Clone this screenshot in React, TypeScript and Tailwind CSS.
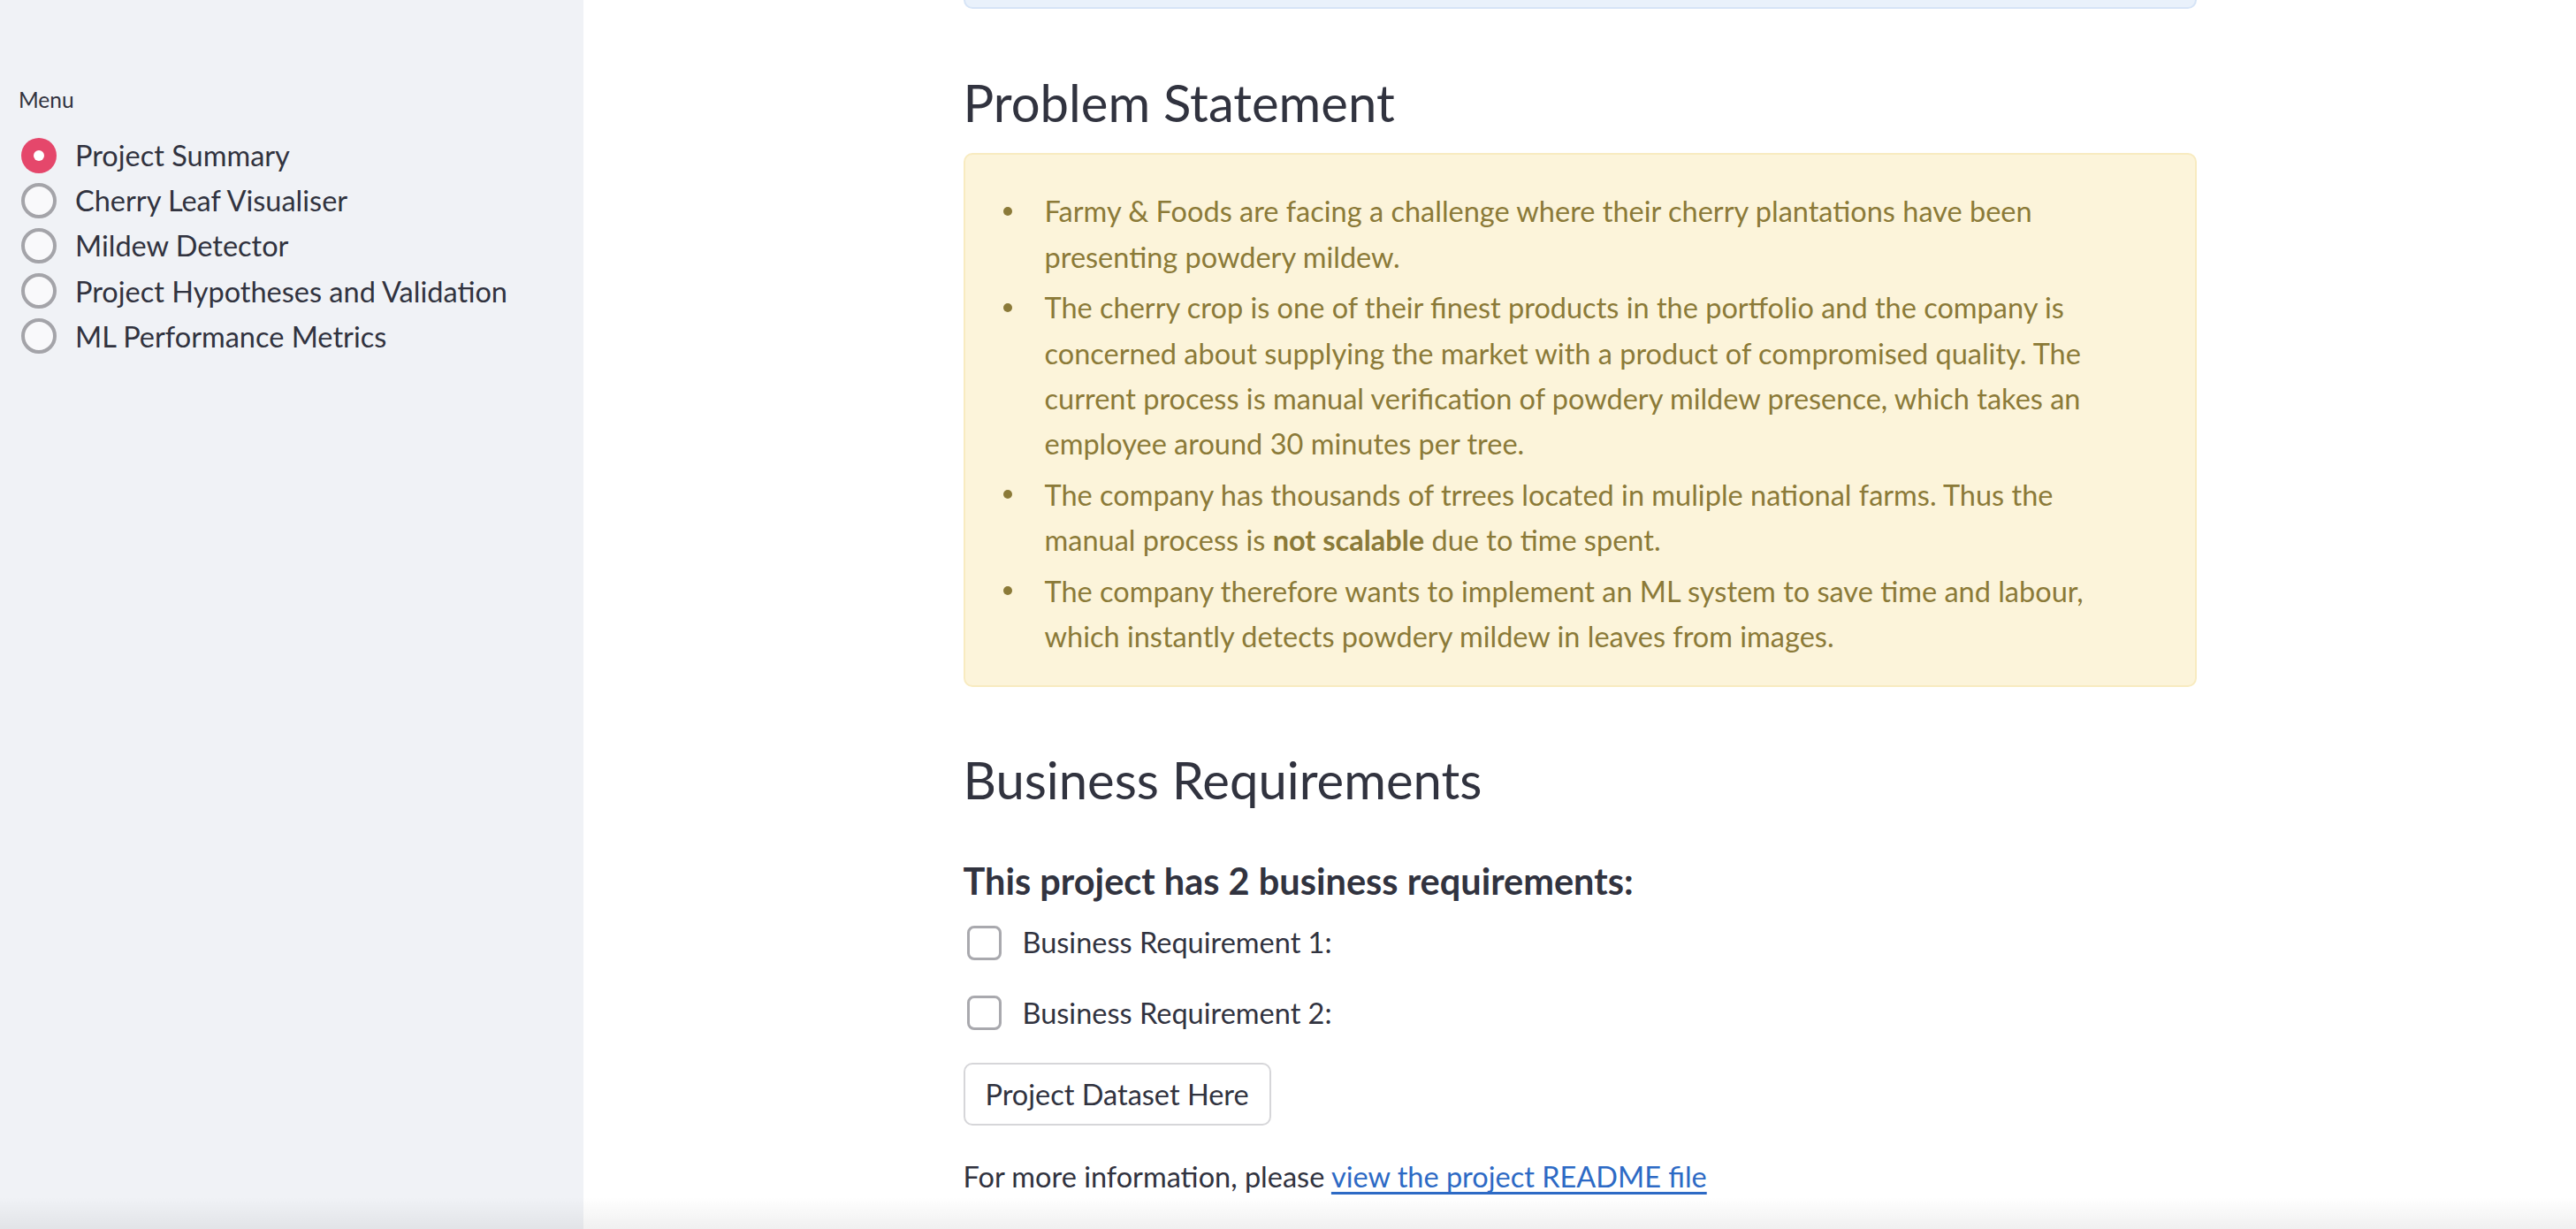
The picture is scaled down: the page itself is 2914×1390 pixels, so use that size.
import React from "react";

const menu = [
  "Project Summary",
  "Cherry Leaf Visualiser",
  "Mildew Detector",
  "Project Hypotheses and Validation",
  "ML Performance Metrics",
];

function Radio({ selected }: { selected: boolean }) {
  if (selected) {
    return (
      <span className="flex h-[40px] w-[40px] shrink-0 items-center justify-center rounded-full bg-[#e5476b]">
        <span className="h-[12px] w-[12px] rounded-full bg-white" />
      </span>
    );
  }
  return <span className="h-[40px] w-[40px] shrink-0 rounded-full border-[4px] border-[#a4a4a9] bg-[#f9f9fb]" />;
}

function Checkbox({ label }: { label: string }) {
  return (
    <label className="flex h-[51.2px] items-center">
      <span className="ml-[4px] h-[39px] w-[39px] shrink-0 rounded-[8px] border-[3px] border-[#a9a9ae] bg-white" />
      <span className="ml-[24px] text-[32.5px] leading-[51.2px]">{label}</span>
    </label>
  );
}

function Bullet({ children, first }: { children: React.ReactNode; first?: boolean }) {
  return (
    <li className={`flex ${first ? "" : "mt-[6.5px]"}`}>
      <span className="flex h-[51.2px] w-[58px] shrink-0 items-center pl-[11px]">
        <span className="h-[10px] w-[10px] rounded-full bg-[#8b7a38]" />
      </span>
      <span className="max-w-[1215px]">{children}</span>
    </li>
  );
}

export default function App() {
  return (
    <div className="relative flex h-[1390px] w-full overflow-hidden font-[Lato,sans-serif] text-[#31333f]">
      <aside className="w-[660px] shrink-0 bg-[#f0f2f6] pl-[21px] pt-[93px]">
        <div className="text-[24.5px] leading-[40px]">Menu</div>
        <div className="mt-[17px] flex flex-col pl-[3px]">
          {menu.map((m, i) => (
            <div key={m} className="flex h-[51.2px] items-center">
              <Radio selected={i === 0} />
              <span className="ml-[21px] text-[32.5px] leading-[51.2px]">{m}</span>
            </div>
          ))}
        </div>
      </aside>

      <main className="flex-1 bg-white">
        <div className="mx-auto w-[1395px]">
          <div className="h-[10px] rounded-b-[10px] border-x-2 border-b-2 border-[#d6e4f6] bg-[#e9f1fb]" />

          <h2 className="mt-[71px] text-[58px] font-normal leading-[69.6px]">Problem Statement</h2>

          <div className="mt-[22.4px] rounded-[10px] border-2 border-[#f8ebc0] bg-[#fcf4da] px-[32px] pb-[30px] pt-[38.5px] text-[32.5px] leading-[51.2px] text-[#8b7a38]">
            <ul>
              <Bullet first>
                Farmy &amp; Foods are facing a challenge where their cherry plantations have been presenting powdery
                mildew.
              </Bullet>
              <Bullet>
                The cherry crop is one of their finest products in the portfolio and the company is concerned about
                supplying the market with a product of compromised quality. The current process is manual verification
                of powdery mildew presence, which takes an employee around 30 minutes per tree.
              </Bullet>
              <Bullet>
                The company has thousands of trrees located in muliple national farms. Thus the manual process is{" "}
                <strong className="font-bold">not scalable</strong> due to time spent.
              </Bullet>
              <Bullet>
                The company therefore wants to implement an ML system to save time and labour, which instantly detects
                powdery mildew in leaves from images.
              </Bullet>
            </ul>
          </div>

          <h2 className="mt-[70px] text-[58px] font-normal leading-[69.6px]">Business Requirements</h2>

          <h4 className="mt-[55px] text-[41.5px] font-bold leading-[49.8px]">This project has 2 business requirements:</h4>

          <div className="mt-[19px]">
            <Checkbox label="Business Requirement 1:" />
          </div>
          <div className="mt-[28.8px]">
            <Checkbox label="Business Requirement 2:" />
          </div>

          <button className="mt-[30.4px] h-[71px] rounded-[10px] border-2 border-[#d6d6d9] bg-white px-[23px] text-[32.5px] leading-[51.2px] text-[#31333f]">
            Project Dataset Here
          </button>

          <p className="mt-[32.5px] text-[32.5px] leading-[51.2px]">
            For more information, please{" "}
            <a
              href="#"
              className="text-[#2d6ac5] underline decoration-[3px] underline-offset-[5px]"
            >
              view the project README file
            </a>
          </p>
        </div>
      </main>

      <div className="pointer-events-none absolute bottom-0 left-0 right-0 h-[36px] bg-gradient-to-b from-transparent to-black/[0.06]" />
    </div>
  );
}
